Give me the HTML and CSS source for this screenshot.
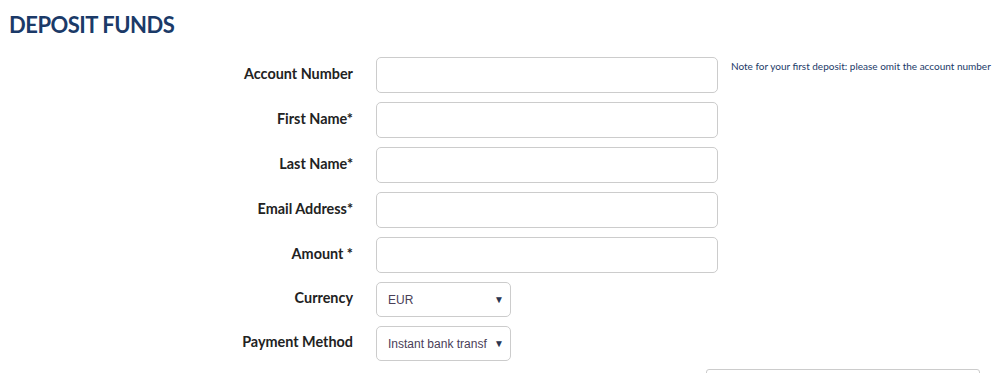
FILE: index.html
```html
<!DOCTYPE html>
<html lang="en">
<head>
    <meta charset="UTF-8">
    <title>Deposit Funds</title>
    <link rel="stylesheet" href="styles.css">
</head>
<body>

    <h1 class="page-title">DEPOSIT FUNDS</h1>

    <!-- Deposit form -->
    <form class="deposit-form">
        <label class="form-label">Account Number</label>
        <input class="form-input" type="text">
        <p class="form-note">Note for your first deposit: please omit the account number</p>

        <label class="form-label">First Name*</label>
        <input class="form-input" type="text">
        <span></span>

        <label class="form-label">Last Name*</label>
        <input class="form-input" type="text">
        <span></span>

        <label class="form-label">Email Address*</label>
        <input class="form-input" type="text">
        <span></span>

        <label class="form-label">Amount *</label>
        <input class="form-input" type="text">
        <span></span>

        <label class="form-label">Currency</label>
        <div class="select-box">
            <span class="select-text">EUR</span>
            <span class="select-arrow">&#9660;</span>
        </div>
        <span></span>

        <label class="form-label">Payment Method</label>
        <div class="select-box">
            <span class="select-text">Instant bank transf</span>
            <span class="select-arrow">&#9660;</span>
        </div>
        <span></span>
    </form>

    <div class="bottom-row">
        <div class="info-box"></div>
    </div>

</body>
</html>
```

FILE: styles.css
```css
body {
    margin: 0;
    padding: 0 8px;
    font-family: Lato, "Open Sans", sans-serif;
    background: #fff;
    color: #222;
}

.page-title {
    margin: 0;
    padding: 11px 0 0 1px;
    font-size: 22px;
    font-weight: 700;
    color: #1b3a68;
    letter-spacing: -0.5px;
    line-height: 28px;
}

.deposit-form {
    display: grid;
    grid-template-columns: 345px 342px 1fr;
    column-gap: 23px;
    row-gap: 9px;
    margin-top: 18px;
    align-items: center;
}

.form-label {
    padding-bottom: 4px;
    text-align: right;
    font-size: 14.4px;
    font-weight: 700;
    color: #222;
}

.form-input {
    box-sizing: border-box;
    height: 36px;
    width: 342px;
    margin: 0;
    border: 1px solid #ccc;
    border-radius: 5px;
    background: #fff;
}

.form-note {
    align-self: start;
    margin: 3px 0 0 -10px;
    font-size: 10px;
    color: #1b3a68;
    white-space: nowrap;
}

.select-box {
    box-sizing: border-box;
    display: flex;
    align-items: center;
    justify-content: space-between;
    width: 135px;
    height: 35px;
    padding: 0 6px 0 11px;
    border: 1px solid #ccc;
    border-radius: 5px;
    font-family: "Liberation Sans", Arial, sans-serif;
    font-size: 12px;
}

.select-text {
    color: #4a4058;
}

.select-arrow {
    font-size: 10px;
    color: #2a3550;
}

.bottom-row {
    display: flex;
    padding-left: 698px;
    margin-top: 8px;
}

.info-box {
    width: 272px;
    height: 20px;
    border: 1px solid #ccc;
    border-radius: 3px;
}
```
